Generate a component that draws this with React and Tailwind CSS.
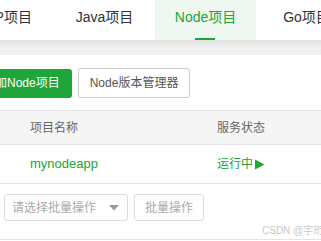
import React from 'react';

const FONT = { fontFamily: '"Liberation Sans", "Noto Sans CJK SC", sans-serif' };

const tabs = [
    { label: 'PHP项目' },
    { label: 'Java项目' },
    { label: 'Node项目', active: true },
    { label: 'Go项目' },
];

export default function App() {
    return (
        <div className="w-[321px] h-[241px] overflow-hidden bg-white" style={FONT}>
            {/* project type tabs */}
            <div className="flex h-[40px] ml-[-47px] bg-white">
                {tabs.map((t) => (
                    <div
                        key={t.label}
                        className={`relative w-[101px] shrink-0 flex items-center justify-center text-[14px] ${t.active ? 'bg-[#eef8f0] text-[#20a53a]' : 'text-[#333]'}`}
                    >
                        <span className="mt-[-6px]">{t.label}</span>
                        {t.active && <span className="absolute bottom-0 left-[40px] w-[20px] h-[2px] bg-[#20a53a]" />}
                    </div>
                ))}
            </div>
            <div className="h-[15px] bg-gradient-to-b from-[#e2e2e2] via-[#efefef] to-[#f0f0f0]" />

            {/* toolbar */}
            <div className="flex items-center gap-[6px] h-[55px] ml-[-29px] pt-[1px]">
                <button className="h-[29px] px-[12px] rounded-[3px] bg-[#20a53a] text-white text-[12px]">添加Node项目</button>
                <button className="h-[30px] px-[11px] rounded-[3px] border border-[#ccc] bg-white text-[#555] text-[12px]">Node版本管理器</button>
            </div>

            {/* table */}
            <div className="border-t border-[#e4e4e4]">
                <div className="flex items-center h-[34px] bg-[#f5f5f5] text-[12px] text-[#666] border-b border-[#e4e4e4]">
                    <span className="w-[217px] shrink-0 pl-[30px]">项目名称</span>
                    <span>服务状态</span>
                </div>
                <div className="flex items-center h-[39px] text-[12px] border-b border-[#e4e4e4]">
                    <span className="w-[217px] shrink-0 pl-[30px] text-[13px] text-[#20a53a]">mynodeapp</span>
                    <span className="text-[#20a53a] flex items-center whitespace-nowrap">
                        运行中
                        <svg width="11" height="11" viewBox="0 0 11 11" className="ml-[1px]">
                            <path d="M1 0.5 L10.5 5.5 L1 10.5 Z" fill="#20a53a" />
                        </svg>
                    </span>
                </div>
            </div>

            {/* batch actions */}
            <div className="relative h-[56px] border-b border-[#e4e4e4]">
                <div className="flex items-center gap-[6px] pl-[4px] pt-[10px]">
                    <div className="w-[124px] h-[27px] border border-[#ddd] rounded-[3px] flex items-center justify-between pl-[7px] pr-[8px] text-[12px] text-[#aaa]">
                        <span>请选择批量操作</span>
                        <svg width="10" height="6" viewBox="0 0 10 6">
                            <path d="M0 0 L10 0 L5 5.5 Z" fill="#999" />
                        </svg>
                    </div>
                    <button className="w-[70px] h-[27px] border border-[#ddd] rounded-[3px] text-[12px] text-[#aaa] bg-white">批量操作</button>
                </div>
                <span className="absolute left-[262px] top-[39px] text-[10px] text-[#c8c8c8] whitespace-nowrap">CSDN @宇珩前端</span>
            </div>
        </div>
    );
}
